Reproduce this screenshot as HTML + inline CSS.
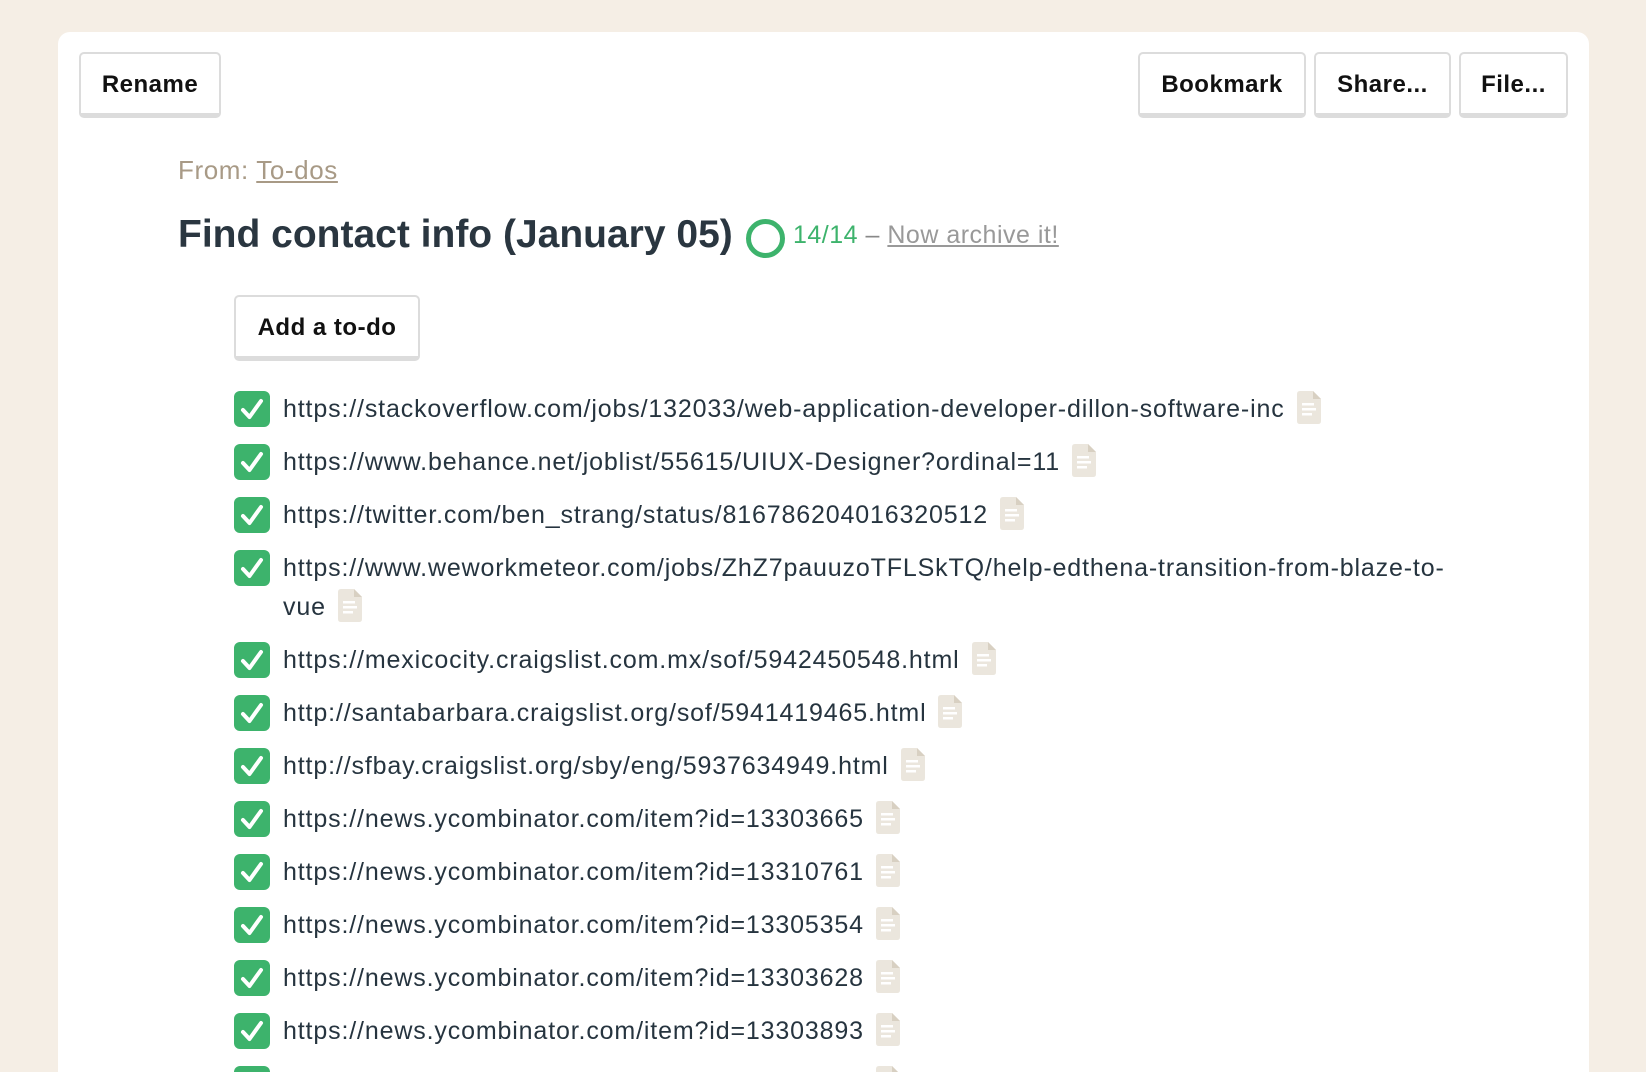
<!DOCTYPE html>
<html><head><meta charset="utf-8"><style>
*{margin:0;padding:0;box-sizing:border-box}
html,body{overflow:hidden}
body{width:1646px;height:1072px;background:#f5eee5;font-family:"Liberation Sans",sans-serif;position:relative;overflow:hidden;color:#26343f}
.card{position:absolute;left:58px;top:32px;width:1531px;height:1100px;background:#fff;border-radius:12px}
.btn{position:absolute;height:66px;border:2px solid #dcdcdc;border-bottom-width:5px;border-radius:5px;background:#fff;font-weight:bold;font-size:24px;letter-spacing:0.5px;color:#111;display:flex;align-items:center;justify-content:center;padding-top:3px}
.from{position:absolute;left:178px;top:155px;font-size:26px;letter-spacing:0.6px;color:#a89a86}
.from u{text-decoration:underline}
.title{position:absolute;left:178px;top:213px;font-size:39px;font-weight:bold;color:#2a3640;letter-spacing:0px}
.ring{position:absolute;left:746px;top:219px;width:39px;height:39px;border:5px solid #3db36c;border-radius:50%}
.cnt{position:absolute;left:793px;top:221px;font-size:25px;letter-spacing:0.5px;color:#3db36c}
.cnt span{color:#888}
.cnt u{color:#999}
.row{position:absolute;left:234px;height:36px;display:flex;align-items:center}
.cb{width:36px;height:36px;border-radius:6px;background:#3db36c;flex:none;display:flex;align-items:center;justify-content:center}
.t{position:absolute;left:283px;font-size:25px;letter-spacing:0.85px;white-space:nowrap;line-height:36px}
.doc{display:inline-block;vertical-align:middle;margin-left:12px;position:relative;top:-3px}
</style></head><body>
<div class="card"></div>
<div class="btn" style="left:79px;top:52px;width:142px">Rename</div>
<div class="btn" style="left:1138px;top:52px;width:168px">Bookmark</div>
<div class="btn" style="left:1314px;top:52px;width:137px">Share...</div>
<div class="btn" style="left:1459px;top:52px;width:109px">File...</div>
<div class="from">From: <u>To-dos</u></div>
<div class="title">Find contact info (January 05)</div>
<div class="ring"></div>
<div class="cnt">14/14 <span>–</span> <u>Now archive it!</u></div>
<div class="btn" style="left:234px;top:295px;width:186px">Add a to-do</div>
<svg width="0" height="0" style="position:absolute"><defs>
<symbol id="ck" viewBox="0 0 36 36"><path d="M9 19 L15.5 26 L27 10" fill="none" stroke="#fff" stroke-width="4" stroke-linecap="round" stroke-linejoin="round"/></symbol>
<symbol id="dc" viewBox="0 0 24 33"><path d="M3 0 H16 L24 8 V30 Q24 33 21 33 H3 Q0 33 0 30 V3 Q0 0 3 0Z" fill="#ebe6dd"/><path d="M16 0 V8 H24Z" fill="#d8d0c2"/><rect x="5" y="12" width="12" height="2.5" fill="#fff"/><rect x="5" y="17" width="14" height="2.5" fill="#fff"/><rect x="5" y="22" width="10" height="2.5" fill="#fff"/></symbol>
</defs></svg>
<div class="row" style="top:391px"><div class="cb"><svg width="36" height="36"><use href="#ck"/></svg></div></div>
<div class="t" style="top:391px">https://stackoverflow.com/jobs/132033/web-application-developer-dillon-software-inc<svg class="doc" width="24" height="33"><use href="#dc"/></svg></div>
<div class="row" style="top:444px"><div class="cb"><svg width="36" height="36"><use href="#ck"/></svg></div></div>
<div class="t" style="top:444px">https://www.behance.net/joblist/55615/UIUX-Designer?ordinal=11<svg class="doc" width="24" height="33"><use href="#dc"/></svg></div>
<div class="row" style="top:497px"><div class="cb"><svg width="36" height="36"><use href="#ck"/></svg></div></div>
<div class="t" style="top:497px">https://twitter.com/ben_strang/status/816786204016320512<svg class="doc" width="24" height="33"><use href="#dc"/></svg></div>
<div class="row" style="top:550px"><div class="cb"><svg width="36" height="36"><use href="#ck"/></svg></div></div>
<div class="t" style="top:550px;line-height:39px;margin-top:-1px">https://www.weworkmeteor.com/jobs/ZhZ7pauuzoTFLSkTQ/help-edthena-transition-from-blaze-to-<br>vue<svg class="doc" width="24" height="33"><use href="#dc"/></svg></div>
<div class="row" style="top:642px"><div class="cb"><svg width="36" height="36"><use href="#ck"/></svg></div></div>
<div class="t" style="top:642px">https://mexicocity.craigslist.com.mx/sof/5942450548.html<svg class="doc" width="24" height="33"><use href="#dc"/></svg></div>
<div class="row" style="top:695px"><div class="cb"><svg width="36" height="36"><use href="#ck"/></svg></div></div>
<div class="t" style="top:695px">http://santabarbara.craigslist.org/sof/5941419465.html<svg class="doc" width="24" height="33"><use href="#dc"/></svg></div>
<div class="row" style="top:748px"><div class="cb"><svg width="36" height="36"><use href="#ck"/></svg></div></div>
<div class="t" style="top:748px">http://sfbay.craigslist.org/sby/eng/5937634949.html<svg class="doc" width="24" height="33"><use href="#dc"/></svg></div>
<div class="row" style="top:801px"><div class="cb"><svg width="36" height="36"><use href="#ck"/></svg></div></div>
<div class="t" style="top:801px">https://news.ycombinator.com/item?id=13303665<svg class="doc" width="24" height="33"><use href="#dc"/></svg></div>
<div class="row" style="top:854px"><div class="cb"><svg width="36" height="36"><use href="#ck"/></svg></div></div>
<div class="t" style="top:854px">https://news.ycombinator.com/item?id=13310761<svg class="doc" width="24" height="33"><use href="#dc"/></svg></div>
<div class="row" style="top:907px"><div class="cb"><svg width="36" height="36"><use href="#ck"/></svg></div></div>
<div class="t" style="top:907px">https://news.ycombinator.com/item?id=13305354<svg class="doc" width="24" height="33"><use href="#dc"/></svg></div>
<div class="row" style="top:960px"><div class="cb"><svg width="36" height="36"><use href="#ck"/></svg></div></div>
<div class="t" style="top:960px">https://news.ycombinator.com/item?id=13303628<svg class="doc" width="24" height="33"><use href="#dc"/></svg></div>
<div class="row" style="top:1013px"><div class="cb"><svg width="36" height="36"><use href="#ck"/></svg></div></div>
<div class="t" style="top:1013px">https://news.ycombinator.com/item?id=13303893<svg class="doc" width="24" height="33"><use href="#dc"/></svg></div>
<div class="row" style="top:1066px"><div class="cb"><svg width="36" height="36"><use href="#ck"/></svg></div></div>
<div class="t" style="top:1066px">https://news.ycombinator.com/item?id=13303512<svg class="doc" width="24" height="33"><use href="#dc"/></svg></div>
</body></html>
